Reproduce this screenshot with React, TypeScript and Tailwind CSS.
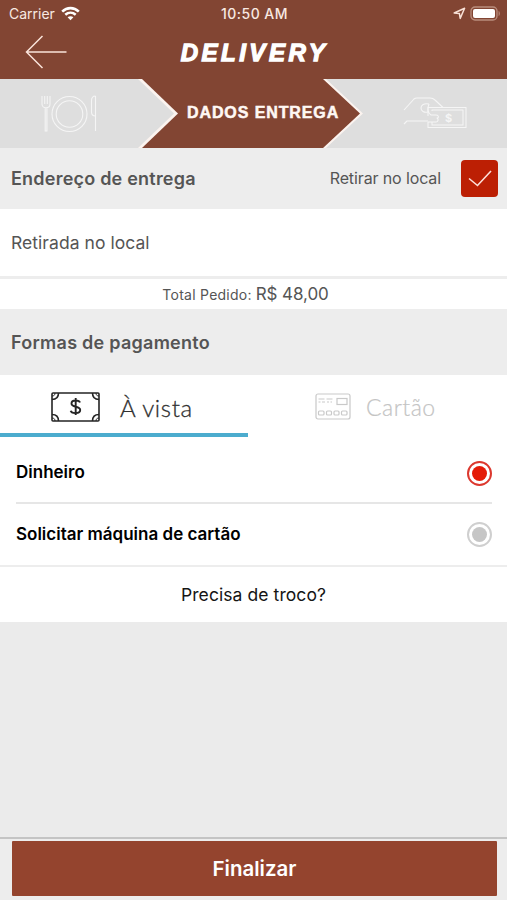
import { useState } from "react"

const methods = [
  { id: "dinheiro", name: "Dinheiro" },
  { id: "maquina", name: "Solicitar máquina de cartão" },
]

function StatusBar() {
  return (
    <div className="grid h-7 grid-cols-3 items-center pb-[1px] pl-[9px] pr-[7px] text-[#f8e9e2]">
      <div className="flex items-center gap-[6px]">
        <span className="text-[14px]">Carrier</span>
        <svg width="19" height="15" viewBox="0 0 19 15" fill="none" stroke="#fff" strokeWidth="2.6" className="-mt-[1px]">
          <path d="M1.2 5.6C6 .9 13 .9 17.8 5.6" />
          <path d="M4.3 8.8C7.4 6 11.6 6 14.7 8.8" />
          <path d="M9.5 14.2 6.6 11.2C8.3 9.8 10.7 9.8 12.4 11.2Z" fill="#fff" stroke="none" />
        </svg>
      </div>
      <span className="text-center text-[14px] font-medium tracking-[0.45px] whitespace-nowrap">10:50 AM</span>
      <div className="-mt-[1px] flex items-center justify-end gap-[4px]">
        <svg width="13" height="13" viewBox="0 0 13 13" fill="none" stroke="#f8e0d6" strokeWidth="1.5" strokeLinejoin="round">
          <path d="M11.6 1.2 7.2 11.4 6.4 6.6 1.2 6Z" />
        </svg>
        <svg width="30" height="15" viewBox="0 0 30 15">
          <rect x="1" y="1" width="26" height="13" rx="4" fill="none" stroke="#b98d7d" strokeWidth="1.3" />
          <rect x="3" y="3" width="22" height="9" rx="2" fill="#fff" />
          <path d="M28.6 5v5c1.6-.6 1.6-4.4 0-5Z" fill="#b98d7d" />
        </svg>
      </div>
    </div>
  )
}

function PlateIcon() {
  return (
    <svg width="56" height="38" viewBox="0 0 56 38" fill="none" stroke="#f5f5f5" strokeWidth="1.1" className="ml-[41px] flex-none">
      <path d="M1 1v8c0 5 8 5 8 0V1M3.7 1v8M6.3 1v8M4.2 13v23h1.7V13" />
      <circle cx="28.5" cy="19" r="17.5" />
      <circle cx="28.5" cy="19" r="13.3" />
      <path d="M54.5 1v35M54.5 1c-3 0-4 2-4 5v11c0 3 1 4 4 4" />
    </svg>
  )
}

function HandMoneyIcon() {
  return (
    <svg width="64" height="33" viewBox="0 0 64 33" fill="none" stroke="#f5f5f5" strokeWidth="1.1" strokeLinejoin="round" className="ml-[80px] flex-none">
      <path d="M1 13 11 2Q12 1 14 1H27Q30 1 32 3L40 10.5" />
      <path d="M1 27l3-3h21" />
      <path d="M25 15c-4 1-7-1-7-4s3-5 8-4" />
      <path d="M25 19V10.5H63V30.5H25V25" />
      <path d="M29 14V13H60V28H29V25" />
      <path d="M26 7c-2 5-1 9 2 11h5c3 0 3 3 1 3 2 1 1 4-1 4h-8" />
      <text x="45.5" y="24.5" textAnchor="middle" fontSize="11" fontWeight="700" fill="#f5f5f5" stroke="none">$</text>
    </svg>
  )
}

function Steps() {
  return (
    <div className="flex h-[69px] items-stretch">
      <div className="w-[178px] flex-none bg-[#fbf3ef] [clip-path:polygon(0_0,142px_0,178px_50%,142px_100%,0_100%)]">
        <div className="flex h-full items-center bg-[#dedede] [clip-path:polygon(0_0,138px_0,174px_50%,138px_100%,0_100%)]">
          <PlateIcon />
        </div>
      </div>
      <div className="flex w-[145px] flex-none items-center pl-[9px] font-['Liberation_Sans',Arial,sans-serif] text-[16px] font-bold tracking-[0.9px] whitespace-nowrap text-[#fff8f4] [-webkit-text-stroke:0.5px_#fff8f4]">
        <span className="relative z-10 -mt-[2px]">DADOS ENTREGA</span>
      </div>
      <div className="w-[184px] flex-none bg-[#fbf3ef] [clip-path:polygon(0_0,100%_0,100%_100%,0_100%,37px_50%)]">
        <div className="flex h-full items-center bg-[#dedede] [clip-path:polygon(3px_0,100%_0,100%_100%,3px_100%,40px_50%)]">
          <HandMoneyIcon />
        </div>
      </div>
    </div>
  )
}

function CashIcon() {
  return (
    <svg width="49" height="30" viewBox="0 0 49 30" fill="none" stroke="#252525" strokeWidth="1.6">
      <rect x="1" y="1" width="47" height="28" rx="1" />
      <path d="M7.5 1C7.5 5 5 7.5 1 7.5M41.5 1c0 4 2.5 6.5 6.5 6.5M7.5 29c0-4-2.5-6.5-6.5-6.5M41.5 29c0-4 2.5-6.5 6.5-6.5" />
      <path d="M4 1C4 3 3 4 1 4M45 1c0 2 1 3 3 3M4 29c0-2-1-3-3-3M45 29c0-2 1-3 3-3" strokeWidth="1" />
      <path d="M29 10.5C28 8 20.5 7.5 20.5 11.5c0 4.5 8.7 2 8.7 6.5 0 4-8.7 4-9.5.8M24.7 6v17" strokeWidth="1.9" />
    </svg>
  )
}

function CardIcon() {
  return (
    <svg width="36" height="27" viewBox="0 0 36 27" fill="none" stroke="#c9c9c9" strokeWidth="1.2">
      <rect x="1" y="1" width="34" height="25" rx="2" />
      <rect x="22" y="5.5" width="10" height="6" />
      <path d="M3.5 6h6M11.5 6h6M3.5 9h2M7 9h3M12 9h2M15.5 9h1.5" />
      <rect x="3.5" y="18" width="5.5" height="4" rx="1" />
      <rect x="11.5" y="18" width="5" height="4" rx="1" />
      <rect x="19" y="18" width="5" height="4" rx="1" />
      <rect x="26.5" y="18" width="5.5" height="4" rx="1" />
    </svg>
  )
}

export default function App() {
  const [pickup, setPickup] = useState(true)
  const [method, setMethod] = useState("dinheiro")

  return (
    <div className="flex h-[900px] w-[507px] flex-col overflow-hidden bg-[#ebebeb] font-['Inter',sans-serif] text-[#555]">
      <header className="h-[148px] flex-none bg-[#824533]">
        <StatusBar />
        <div className="grid h-[51px] grid-cols-[1fr_auto_1fr] items-center pl-[25px]">
          <button aria-label="Voltar" className="w-fit">
            <svg width="42" height="34" viewBox="0 0 42 34" fill="none" stroke="#fae3da" strokeWidth="1.5" className="-mt-[3px]">
              <path d="M17.5 1 1.5 17 17.5 33M1.5 17H41.5" />
            </svg>
          </button>
          <h1 className="-mt-[2px] mr-[23px] font-['Liberation_Sans',Arial,sans-serif] text-[24px] font-bold italic tracking-[3.5px] text-white [-webkit-text-stroke:1.3px_#fff]">
            DELIVERY
          </h1>
        </div>
        <Steps />
      </header>

      <div className="flex h-[61px] flex-none items-center bg-[#ededed] pl-[11px] pr-[9px]">
        <h2 className="text-[18px] font-semibold tracking-[0.22px]">Endereço de entrega</h2>
        <span className="-mt-[2px] ml-auto mr-5 text-[16px] tracking-[-0.12px]">Retirar no local</span>
        <button
          onClick={() => setPickup(!pickup)}
          aria-label="Retirar no local"
          className="flex size-[37px] items-center justify-center rounded-[4px] bg-[#bc1f04]"
        >
          {pickup && (
            <svg width="24" height="17" viewBox="0 0 24 17" fill="none" stroke="#fde0da" strokeWidth="1.6">
              <path d="M1 8.5 9.5 15.5 23 1" />
            </svg>
          )}
        </button>
      </div>

      <div className="flex h-[67px] flex-none items-center bg-white pl-[11px] pt-[2px] text-[17.5px] tracking-[0.05px]">Retirada no local</div>

      <div className="flex h-[33px] flex-none items-center justify-center gap-1 border-t-[3px] border-[#ededed] bg-white pr-[16px]">
        <span className="text-[14px] tracking-[0.25px]">Total Pedido:</span>
        <span className="mt-[1px] text-[17px] tracking-[-0.1px]">R$ 48,00</span>
      </div>

      <div className="flex h-[66px] flex-none items-center bg-[#ededed] pl-[11px]">
        <h2 className="text-[18px] font-semibold tracking-[0.26px]">Formas de pagamento</h2>
      </div>

      <div className="flex h-[62px] flex-none bg-white font-['Lato',sans-serif] text-[24px]">
        <div className="flex w-[248px] items-center gap-[20px] border-b-4 border-[#4cacce] pl-[51px] pt-[5px] text-[#303030]">
          <CashIcon />
          <span className="mt-[2px] font-light tracking-[0.65px] [-webkit-text-stroke:0.3px_#303030]">À vista</span>
        </div>
        <div className="flex flex-1 items-center gap-[15px] pl-[67px] pt-[1px] text-[23px] text-[#c4c4c4]">
          <CardIcon />
          <span className="mt-[2px] font-light tracking-[0.5px] [-webkit-text-stroke:0.2px_#c4c4c4]">Cartão</span>
        </div>
      </div>

      <ul className="flex-none bg-white pl-4 pr-[15px] text-[17px] font-semibold text-black">
        {methods.map((m, i) => (
          <li
            key={m.id}
            onClick={() => setMethod(m.id)}
            className={i === 0 ? "flex h-[67px] items-center border-b-2 border-[#e6e6e6] pt-[7px]" : "flex h-[61px] items-center"}
          >
            <span>{m.name}</span>
            <span
              className={
                method === m.id
                  ? "ml-auto flex size-[25px] items-center justify-center rounded-full border-2 border-[#dc382e] text-[#e41b07]"
                  : "ml-auto flex size-[25px] items-center justify-center rounded-full border-2 border-[#cfcfcf] text-[#c6c6c6]"
              }
            >
              <span className="size-[15px] rounded-full bg-current" />
            </span>
          </li>
        ))}
      </ul>

      <div className="flex h-[57px] flex-none items-center justify-center border-t-2 border-[#ededed] bg-white pt-[1px] text-[17.5px] tracking-[0.08px] text-[#151515]">
        Precisa de troco?
      </div>

      <footer className="mt-auto h-[63px] flex-none border-t-2 border-[#c4c4c4] bg-[#ededed] pl-3 pr-[10px] pt-[2px]">
        <button className="h-[55px] w-full rounded-[1px] bg-[#94442e] pt-[2px] text-[20.5px] font-semibold text-white">Finalizar</button>
      </footer>
    </div>
  )
}
